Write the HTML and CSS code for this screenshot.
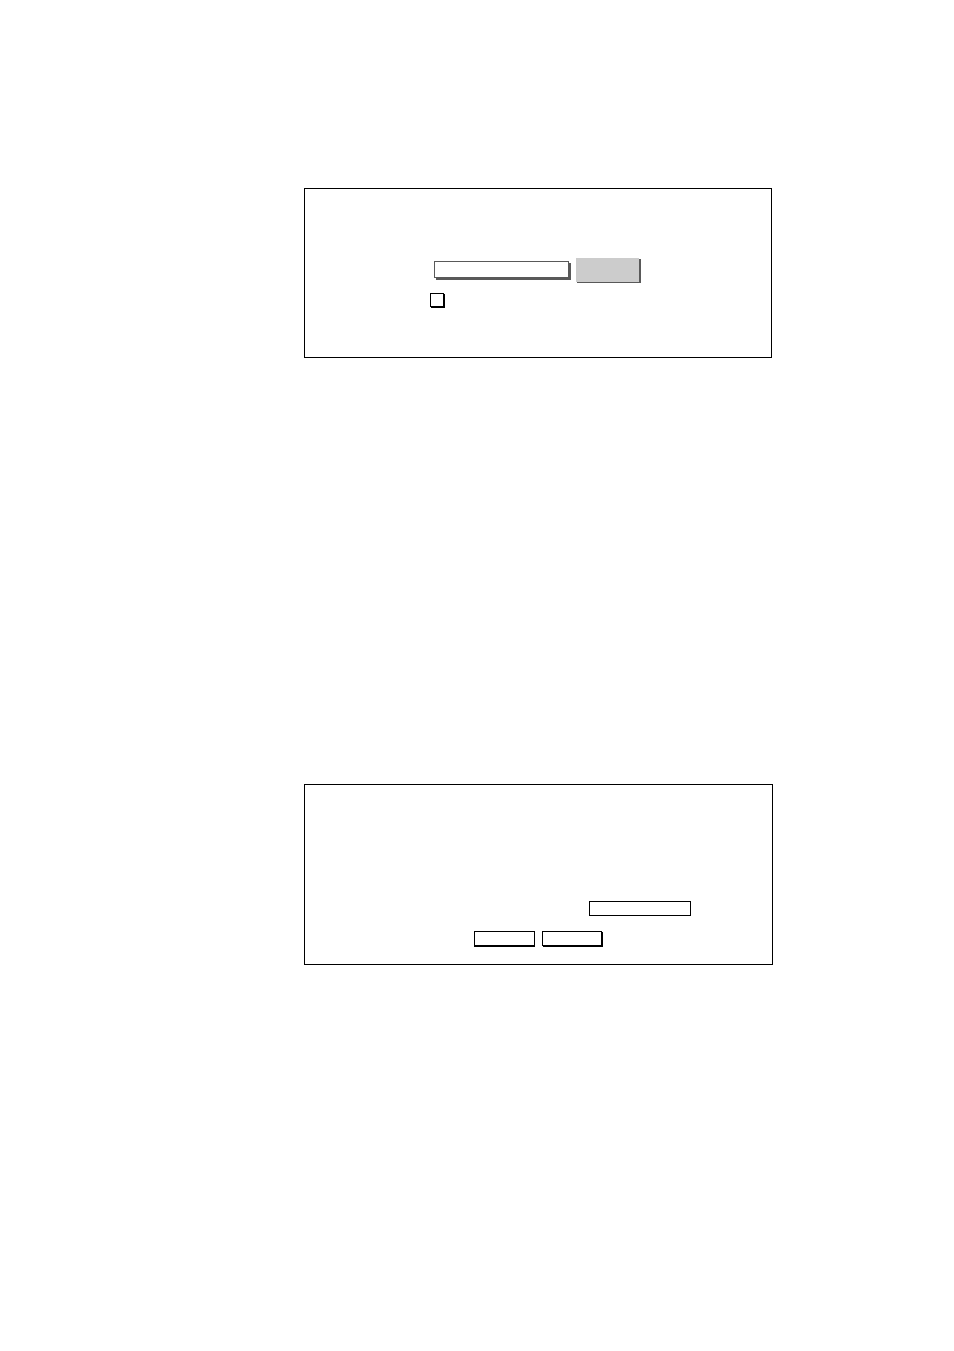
FILE: index.html
```html
<!DOCTYPE html>
<html lang="en">
<head>
<meta charset="utf-8">
<title>Forms</title>
<link rel="stylesheet" href="styles.css">
</head>
<body>
<main class="page">
  <form class="panel panel-search">
    <div class="row search-row">
      <input class="field field-raised" type="text" aria-label="Value">
      <button class="button-gray" type="button" aria-label="Submit"></button>
    </div>
    <div class="row check-row">
      <input class="check" type="checkbox" aria-label="Option">
    </div>
  </form>
  <form class="panel panel-confirm">
    <div class="row value-row">
      <input class="field field-flat" type="text" aria-label="Value">
    </div>
    <div class="row action-row">
      <button class="button-outline" type="button" aria-label="OK"></button>
      <button class="button-outline button-raised" type="button" aria-label="Cancel"></button>
    </div>
  </form>
</main>
</body>
</html>
```

FILE: styles.css
```css
* {
  box-sizing: border-box;
}

body {
  margin: 0;
  background: #fff;
  font-family: "Liberation Sans", Arial, sans-serif;
  font-size: 12px;
}

.page {
  display: flex;
  flex-direction: column;
  gap: 426px;
  padding: 188px 181px 188px 304px;
}

.panel {
  border: 1px solid #000;
}

.panel-search {
  margin-right: 1px;
  padding: 69px 0 50px;
}

.panel-confirm {
  padding: 116px 0 18px;
}

.row {
  display: flex;
  align-items: flex-start;
  gap: 7px;
}

.search-row {
  padding-left: 129px;
}

.check-row {
  padding: 11px 0 0 125px;
}

.value-row {
  justify-content: flex-end;
  padding-right: 81px;
}

.action-row {
  padding: 15px 0 0 169px;
}

.field,
.check,
.button-gray,
.button-outline {
  appearance: none;
  margin: 0;
  padding: 0 4px;
  border: 1px solid #000;
  border-radius: 0;
  background: #fff;
  font: inherit;
}

.field-raised {
  width: 135px;
  height: 17px;
  margin-top: 3px;
  border-color: #595959;
  box-shadow: 2px 2px 0 #595959;
}

.field-flat {
  width: 102px;
  height: 15px;
}

.button-gray {
  width: 63px;
  height: 24px;
  border: 0;
  background: #ccc;
  box-shadow: 1px 1px 0 #595959, 2px 1px 0 #595959;
}

.check {
  width: 14px;
  height: 14px;
  padding: 0;
  box-shadow: 1px 1px 0 #000;
}

.check:checked {
  background: #000;
}

.button-outline {
  width: 61px;
  height: 15px;
  box-shadow: 0 1px 0 #000;
}

.button-raised {
  width: 60px;
  box-shadow: 1px 1px 0 #000;
}
```
